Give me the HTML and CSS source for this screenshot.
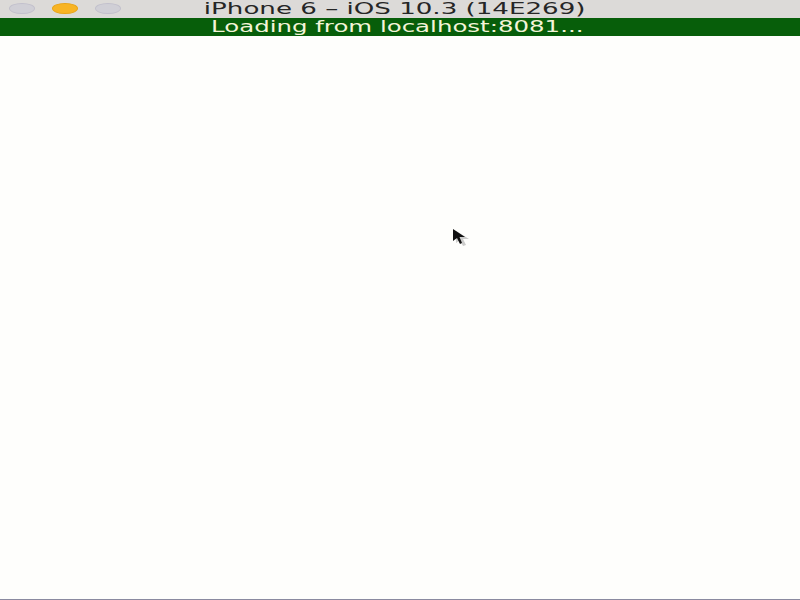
FILE: index.html
```html
<!DOCTYPE html>
<html>
<head>
<meta charset="utf-8">
<link rel="stylesheet" href="styles.css">
</head>
<body>
<div class="titlebar">
  <div class="lights">
    <span class="light gray"></span>
    <span class="light yellow"></span>
    <span class="light gray"></span>
  </div>
  <div class="title">iPhone 6 – iOS 10.3 (14E269)</div>
</div>
<div class="loading"><span class="loading-text">Loading from localhost:8081...</span></div>
<div class="content"></div>
<svg class="cursor" width="24" height="20" viewBox="0 0 24 20">
  <path d="M3 2 L3 14 L7 11 L10 17 L13 16 L10 10 L16 10 Z" fill="#999" opacity="0.5" transform="translate(2,1)"/>
  <path d="M2 1 L2 13 L6 10 L9 16 L11 15 L8.5 9 L14 9 Z" fill="#111"/>
</svg>
</body>
</html>
```
FILE: styles.css
```css
html, body {
  margin: 0;
  padding: 0;
  width: 800px;
  height: 600px;
  overflow: hidden;
  background: #fefefc;
  font-family: "DejaVu Sans", Verdana, sans-serif;
}
body {
  display: flex;
  flex-direction: column;
  position: relative;
  box-sizing: border-box;
  border-bottom: 1px solid #8a8aa0;
}
.titlebar {
  height: 18px;
  background: #dcdad8;
  position: relative;
  display: flex;
  align-items: center;
  justify-content: center;
}
.lights {
  position: absolute;
  left: 9px;
  top: 3px;
  display: flex;
  gap: 17px;
}
.light {
  width: 26px;
  height: 11px;
  border-radius: 50%;
  box-sizing: border-box;
}
.light.gray {
  background: #d0cfd6;
  border: 1px solid #c2c0cc;
}
.light.yellow {
  background: #f8b424;
  border: 1px solid #e8a418;
}
.title {
  font-size: 15px;
  color: #262626;
  line-height: 18px;
  white-space: nowrap;
  transform: scaleX(1.74);
  margin-left: -10px;
}
.loading {
  height: 18px;
  background: #075e0a;
  display: flex;
  align-items: center;
  justify-content: center;
  padding-right: 6px;
}
.loading-text {
  color: #f4f4d8;
  font-size: 15px;
  line-height: 18px;
  white-space: nowrap;
  transform: scaleX(1.63);
}
.content {
  flex: 1;
}
.cursor {
  position: absolute;
  left: 451px;
  top: 228px;
}
```
